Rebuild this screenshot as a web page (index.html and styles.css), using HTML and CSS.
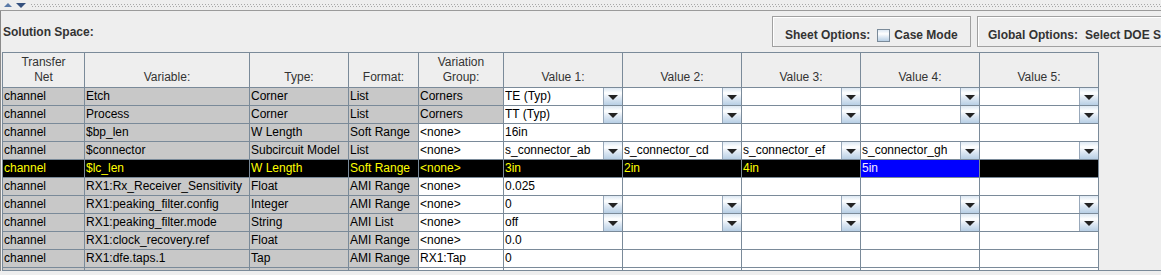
FILE: index.html
```html
<!DOCTYPE html>
<html lang="en">
<head>
    <meta charset="UTF-8">
    <title>Solution Space</title>
    <link rel="stylesheet" href="styles.css">
</head>
<body>
    <!-- split pane divider -->
    <div class="splitter">
        <span class="arrow-up"></span>
        <span class="arrow-down"></span>
        <span class="bumps"></span>
    </div>

    <div class="panel">
        <!-- options bar -->
        <div class="top-bar">
            <div class="title">Solution Space:</div>
            <div class="opt-box sheet-box">
                <span>Sheet Options:</span>
                <span class="checkbox"></span>
                <span class="check-label">Case Mode</span>
            </div>
            <div class="opt-box global-box">
                <span>Global Options:</span>
                <span>Select DOE Sheet</span>
            </div>
        </div>

        <!-- variables table -->
        <div class="table-wrap">
            <div class="grid" id="grid"></div>
        </div>
    </div>

    <script>
        const headers = ['Transfer<br>Net', 'Variable:', 'Type:', 'Format:', 'Variation<br>Group:',
                         'Value 1:', 'Value 2:', 'Value 3:', 'Value 4:', 'Value 5:'];

        // g = grey (read only), w = editable text, c = combo box, s = focused cell
        const rows = [
            { cells: ['channel', 'Etch', 'Corner', 'List', 'Corners', 'TE (Typ)', '', '', '', ''], kinds: 'gggggccccc' },
            { cells: ['channel', 'Process', 'Corner', 'List', 'Corners', 'TT (Typ)', '', '', '', ''], kinds: 'gggggccccc' },
            { cells: ['channel', '$bp_len', 'W Length', 'Soft Range', '<none>', '16in', '', '', '', ''], kinds: 'ggggwwwwww' },
            { cells: ['channel', '$connector', 'Subcircuit Model', 'List', '<none>', 's_connector_ab', 's_connector_cd', 's_connector_ef', 's_connector_gh', ''], kinds: 'ggggwccccc' },
            { cells: ['channel', '$lc_len', 'W Length', 'Soft Range', '<none>', '3in', '2in', '4in', '5in', ''], kinds: 'ggggwwwwsw', selected: true },
            { cells: ['channel', 'RX1:Rx_Receiver_Sensitivity', 'Float', 'AMI Range', '<none>', '0.025', '', '', '', ''], kinds: 'ggggwwwwww' },
            { cells: ['channel', 'RX1:peaking_filter.config', 'Integer', 'AMI Range', '<none>', '0', '', '', '', ''], kinds: 'ggggwccccc' },
            { cells: ['channel', 'RX1:peaking_filter.mode', 'String', 'AMI List', '<none>', 'off', '', '', '', ''], kinds: 'ggggwccccc' },
            { cells: ['channel', 'RX1:clock_recovery.ref', 'Float', 'AMI Range', '<none>', '0.0', '', '', '', ''], kinds: 'ggggwwwwww' },
            { cells: ['channel', 'RX1:dfe.taps.1', 'Tap', 'AMI Range', 'RX1:Tap', '0', '', '', '', ''], kinds: 'ggggwwwwww' },
            { cells: ['channel', 'RX1:dfe.taps.2', 'Tap', 'AMI Range', 'RX1:Tap', '0', '', '', '', ''], kinds: 'ggggwwwwww' }
        ];

        function esc(s) {
            return s.replace(/&/g, '&amp;').replace(/</g, '&lt;').replace(/>/g, '&gt;');
        }

        function renderGrid() {
            const grid = document.getElementById('grid');
            headers.forEach(h => {
                const th = document.createElement('div');
                th.className = 'head';
                th.innerHTML = '<span>' + h + '</span>';
                grid.appendChild(th);
            });
            rows.forEach(row => {
                row.cells.forEach((text, i) => {
                    const kind = row.kinds[i];
                    const cell = document.createElement('div');
                    cell.className = 'cell';
                    if (row.selected) {
                        cell.classList.add(kind === 's' ? 'cell-focus' : 'cell-sel');
                    } else if (kind === 'g') {
                        cell.classList.add('cell-grey');
                    }
                    if (kind === 'c' && !row.selected) {
                        cell.classList.add('combo');
                        cell.innerHTML = '<span class="combo-text">' + esc(text) + '</span><span class="combo-btn"><i></i></span>';
                    } else {
                        cell.textContent = text;
                    }
                    grid.appendChild(cell);
                });
            });
        }

        document.addEventListener('DOMContentLoaded', renderGrid);
    </script>
</body>
</html>
```

FILE: styles.css
```css
* {
    margin: 0;
    padding: 0;
    box-sizing: border-box;
}

body {
    background: #eeeeee;
    font-family: 'Liberation Sans', Arial, sans-serif;
    font-size: 12px;
    color: #000;
    overflow: hidden;
    width: 1161px;
    height: 275px;
}

/* split pane divider */
.splitter {
    height: 11px;
    border-bottom: 1px solid #9a9a9a;
    display: flex;
    align-items: center;
    padding-left: 4px;
    gap: 3px;
}

.arrow-up {
    width: 0;
    height: 0;
    border-left: 4px solid transparent;
    border-right: 4px solid transparent;
    border-bottom: 4px solid #5a7aa8;
}

.arrow-down {
    width: 0;
    height: 0;
    margin-left: 1px;
    border-left: 5px solid transparent;
    border-right: 5px solid transparent;
    border-top: 5px solid #34507e;
}

.bumps {
    flex: 1;
    height: 3px;
    margin-left: 2px;
    background-image:
        linear-gradient(90deg, #a8a8a8 1px, transparent 1px),
        linear-gradient(90deg, transparent 1px, #a8a8a8 1px, #a8a8a8 2px, transparent 2px);
    background-size: 3px 1px, 3px 1px;
    background-position: 0 0, 0 2px;
    background-repeat: repeat-x;
}

/* main panel */
.panel {
    border-left: 1px solid #8a8a8a;
    padding-left: 1px;
}

.top-bar {
    height: 41px;
    display: flex;
    align-items: center;
    padding-left: 1px;
    font-weight: bold;
    color: #333;
    white-space: nowrap;
}

.title {
    flex: none;
    width: 769px;
    padding-top: 1px;
}

.opt-box {
    flex: none;
    height: 31px;
    border: 1px solid #a0a0a0;
    box-shadow: inset 1px 1px #fff;
    display: flex;
    align-items: flex-end;
    padding: 0 0 4px 12px;
    gap: 7px;
}

.sheet-box {
    width: 199px;
}

.global-box {
    width: 240px;
    margin-left: 6px;
    padding-left: 10px;
}

.checkbox {
    width: 13px;
    height: 13px;
    border: 1px solid #7a8a99;
    background: linear-gradient(to bottom, #dde8f3, #ffffff 35%, #dde8f3 65%, #b8cfe5);
}

.check-label {
    margin-left: -3px;
}

/* table */
.table-wrap {
    height: 219px;
    overflow: hidden;
    border-bottom: 1px solid #7a8a99;
}

.grid {
    display: grid;
    grid-template-columns: 81px 164px 98px 69px 84px 118px 118px 118px 118px 118px;
    grid-template-rows: 34px;
    grid-auto-rows: 17px;
    gap: 1px;
    width: max-content;
    background: #7a8a99;
    border: 1px solid #7a8a99;
}

.head {
    background: #eeeeee;
    color: #333;
    text-align: center;
    display: flex;
    flex-direction: column;
    justify-content: flex-end;
    line-height: 15px;
    padding-bottom: 2px;
}

.cell {
    background: #fff;
    line-height: 17px;
    padding: 0 1px;
    white-space: nowrap;
    overflow: hidden;
}

.cell-grey {
    background: #c8c8c8;
}

.cell-sel {
    background: #000;
    color: #ffff00;
}

.cell-focus {
    background: #0000ff;
    color: #f4eaff;
}

.combo {
    display: flex;
    padding-right: 0;
}

.combo-text {
    flex: 1;
    overflow: hidden;
}

.combo-btn {
    width: 19px;
    border-left: 1px solid #98a8ba;
    background: linear-gradient(to bottom, #dde8f3, #ffffff 30%, #dde8f3 60%, #b8cfe5);
    display: flex;
    align-items: center;
    justify-content: center;
}

.combo-btn i {
    width: 0;
    height: 0;
    border-left: 5px solid transparent;
    border-right: 5px solid transparent;
    border-top: 5px solid #222;
    margin-top: 1px;
}
```
